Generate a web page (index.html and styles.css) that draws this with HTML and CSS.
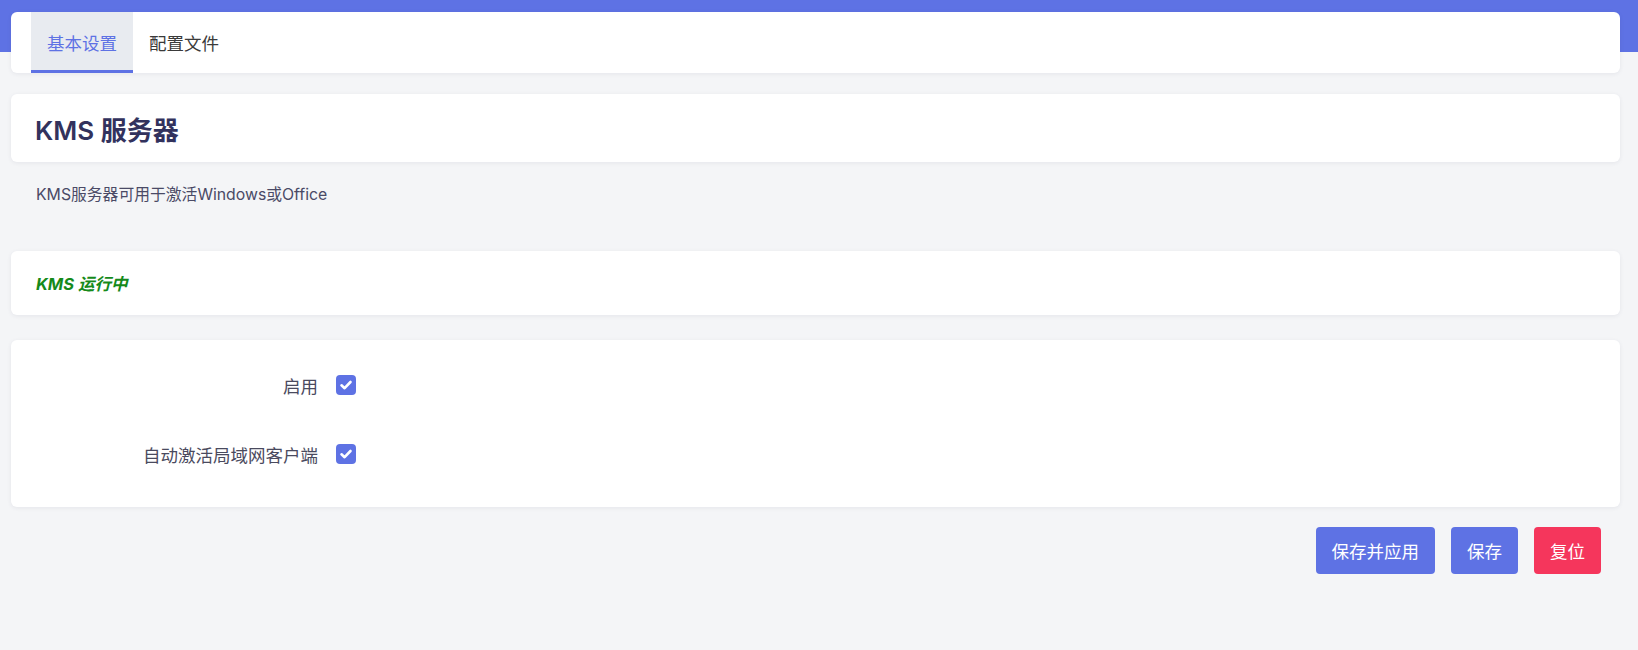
FILE: index.html
```html
<!DOCTYPE html>
<html lang="zh-CN">
<head>
    <meta charset="UTF-8">
    <meta name="viewport" content="width=device-width, initial-scale=1.0">
    <title>KMS 服务器</title>
    <link rel="stylesheet" href="styles.css">
</head>
<body>
    <div class="main">
        <div class="card tabs">
            <div class="tab active">基本设置</div>
            <div class="tab">配置文件</div>
        </div>

        <div class="card title-card">
            <h2>KMS 服务器</h2>
        </div>
        <div class="desc">KMS服务器可用于激活Windows或Office</div>

        <div class="card status-card">
            <em class="status">KMS 运行中</em>
        </div>

        <div class="card form-card">
            <div class="form-row">
                <label class="form-label">启用</label>
                <span class="checkbox">
                    <svg viewBox="0 0 20 20" width="20" height="20"><path d="M5.5 10.3 L8.6 13.2 L14.5 7" fill="none" stroke="#fff" stroke-width="2.6" stroke-linecap="round" stroke-linejoin="round"/></svg>
                </span>
            </div>
            <div class="form-row">
                <label class="form-label">自动激活局域网客户端</label>
                <span class="checkbox">
                    <svg viewBox="0 0 20 20" width="20" height="20"><path d="M5.5 10.3 L8.6 13.2 L14.5 7" fill="none" stroke="#fff" stroke-width="2.6" stroke-linecap="round" stroke-linejoin="round"/></svg>
                </span>
            </div>
        </div>

        <div class="actions">
            <button class="btn btn-primary">保存并应用</button>
            <button class="btn btn-primary">保存</button>
            <button class="btn btn-danger">复位</button>
        </div>
    </div>
</body>
</html>
```

FILE: styles.css
```css
body, html {
    margin: 0;
    font-family: "Inter", "Noto Sans CJK SC", sans-serif;
    color: #32325d;
}
body {
    background: linear-gradient(#5e72e4 52px, #f4f5f7 52px);
    min-height: 650px;
}
.main {
    padding: 12px 18px 0 11px;
}
.card {
    background-color: white;
    border-radius: 6px;
    box-shadow: 0 1px 4px rgba(50,50,93,0.08);
}
.tabs {
    display: flex;
    height: 61px;
    padding-left: 20px;
}
.tab {
    display: flex;
    align-items: center;
    padding: 0 16px;
    font-size: 17.5px;
    color: #3a3a3a;
    box-sizing: border-box;
}
.tab.active {
    background-color: #e8ebf0;
    color: #5e72e4;
    border-bottom: 3px solid #5e72e4;
    padding-top: 3px;
}
.title-card {
    margin-top: 21px;
    height: 68px;
    display: flex;
    align-items: center;
    padding-left: 24px;
}
.title-card h2 {
    margin: 0;
    font-size: 26px;
    font-weight: 600;
    color: #32325d;
}
.desc {
    padding: 20px 0 0 25px;
    height: 69px;
    font-size: 15.8px;
    color: #4a4a66;
}
.status-card {
    height: 64px;
    display: flex;
    align-items: center;
    padding-left: 25px;
}
.status {
    color: #158a1a;
    font-weight: 700;
    font-size: 16.5px;
}
.form-card {
    margin-top: 25px;
    height: 167px;
    box-sizing: border-box;
    padding-top: 35px;
}
.form-row {
    display: flex;
    align-items: center;
    height: 20px;
    margin-bottom: 49px;
}
.form-label {
    width: 307px;
    text-align: right;
    margin-right: 18px;
    font-size: 17.5px;
    color: #4a4a5e;
}
.checkbox {
    width: 20px;
    height: 20px;
    border-radius: 4px;
    background-color: #5e72e4;
    display: flex;
}
.actions {
    display: flex;
    justify-content: flex-end;
    gap: 16px;
    margin-top: 20px;
    padding-right: 19px;
}
.btn {
    height: 47px;
    padding: 0 16px;
    border: none;
    border-radius: 4px;
    font-family: "Noto Sans CJK SC", sans-serif;
    font-size: 17.5px;
    color: white;
    cursor: pointer;
}
.btn-primary {
    background-color: #5e72e4;
}
.btn-danger {
    background-color: #f5365c;
}
```
